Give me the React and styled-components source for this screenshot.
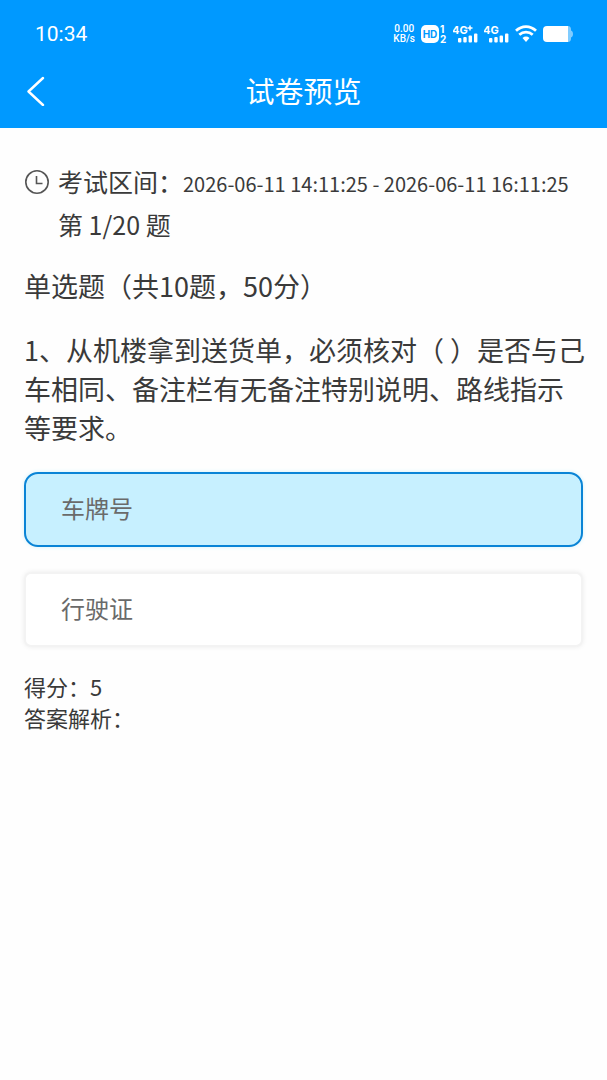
import React from 'react';
import styled, { createGlobalStyle } from 'styled-components';

const GlobalStyle = createGlobalStyle`
  *, *::before, *::after { box-sizing: border-box; }
  body {
    margin: 0;
    background: #fefefe;
    color: #3a3a3a;
    font-family: "Noto Sans CJK SC", "Noto Sans", sans-serif;
  }
`;

const Header = styled.header`
  background: #0099ff;
  color: #fff;
`;

const StatusBar = styled.div`
  display: flex;
  align-items: center;
  justify-content: space-between;
  height: 68px;
  padding: 0 34px 0 35px;
`;

const Time = styled.time`
  font: 400 21px/28px Roboto, sans-serif;
`;

const StatusIcons = styled.div`
  display: flex;
  align-items: center;
  gap: 6px;

  svg { display: block; flex: none; }
`;

const Speed = styled.div`
  font: 500 10px/10px Roboto, sans-serif;
  text-align: center;
`;

const NavBar = styled.nav`
  display: grid;
  grid-template-columns: 72px 1fr 72px;
  align-items: center;
  height: 60px;
  padding-bottom: 14px;
`;

const BackButton = styled.button`
  display: flex;
  align-items: center;
  height: 46px;
  padding: 0 0 0 26px;
  border: 0;
  background: none;
  color: inherit;
  cursor: pointer;
`;

const Title = styled.h1`
  margin: 0;
  padding-bottom: 2px;
  font-size: 29px;
  line-height: 42px;
  font-weight: 400;
  text-align: center;
`;

const Content = styled.main`
  padding: 32px 24px;
`;

const ExamInfo = styled.section`
  display: grid;
  grid-template-columns: 34px 1fr;
  align-items: center;
  font-size: 25px;
  line-height: 43px;

  svg { display: block; }
`;

const Period = styled.div`
  display: flex;
  align-items: baseline;
  white-space: nowrap;
`;

const PeriodRange = styled.span`
  font-size: 20px;
  line-height: 30px;
`;

const Progress = styled.div`
  grid-column: 2;
`;

const SectionTitle = styled.h2`
  margin: 20px 0 24px;
  font-size: 27px;
  line-height: 40px;
  font-weight: 400;
`;

const Question = styled.fieldset`
  min-width: 0;
  margin: 0;
  padding: 0;
  border: 0;
`;

const QuestionText = styled.legend`
  width: calc(100% + 6px);
  margin-right: -6px;
  padding: 0;
  font-size: 27px;
  line-height: 39px;
`;

const Options = styled.div`
  display: grid;
  gap: 25px;
  margin-top: 25px;
`;

const Option = styled.label`
  position: relative;
  display: flex;
  align-items: center;
  height: 75px;
  padding: 0 35px 4px;
  border: 2px solid #f3f3f3;
  border-radius: 7px;
  background: #fff;
  box-shadow: 0 0 5px #ececec;
  color: #6a6a6a;
  font-size: 24px;
  line-height: 36px;
  cursor: pointer;

  &:has(input:checked) {
    border-color: #0a84d6;
    border-radius: 14px;
    background: #c7f0ff;
    box-shadow: 0 0 4px #d4f2fb;
  }
`;

const OptionInput = styled.input`
  position: absolute;
  inset: 0;
  margin: 0;
  opacity: 0;
  cursor: pointer;
`;

const Result = styled.section`
  margin-top: 24px;
  font-size: 22px;
  line-height: 31px;
`;

const ResultLine = styled.p`
  margin: 0;
`;

const glyphFont = { fontFamily: 'Inter, sans-serif', fontWeight: 700, fill: '#fff' };

function HdIcon() {
  return (
    <svg width="26" height="26" viewBox="0 -4 26 26" aria-hidden="true">
      <rect x="0" y="0" width="18" height="18" rx="5" fill="#fff" />
      <text {...glyphFont} x="9" y="13" textAnchor="middle" fontSize="10" fill="#0099ff">HD</text>
      <text {...glyphFont} x="19" y="8" fontSize="10">1</text>
      <text {...glyphFont} x="19" y="18" fontSize="10">2</text>
    </svg>
  );
}

function SignalIcon({ plus }) {
  return (
    <svg width="25" height="26" viewBox="0 -4 25 26" aria-hidden="true">
      <text {...glyphFont} x="-1" y="9" fontSize="11">4G</text>
      {plus && <path d="M17 .5v5M14.500 3h5" stroke="#fff" strokeWidth="1.500" />}
      <g fill="#fff">
        <rect x="5" y="13" width="3.4" height="4.500" rx="1" />
        <rect x="10.3" y="12" width="3.4" height="5.500" rx="1" />
        <rect x="15.6" y="10.500" width="3.4" height="7" rx="1" />
        <rect x="21" y="8.500" width="3.4" height="9" rx="1" />
      </g>
    </svg>
  );
}

function WifiIcon() {
  return (
    <svg width="22" height="18" viewBox="0 0 22 18" fill="none" stroke="#fff" strokeWidth="2.700" aria-hidden="true">
      <path d="M1 5.800C6.8.2 15.2.2 21 5.800" />
      <path d="M4.300 9.800c3.900-3.700 9.500-3.700 13.400 0" />
      <path d="M7.500 12.900c2.200-1.900 4.800-1.900 7 0L11 17z" fill="#fff" stroke="none" />
    </svg>
  );
}

function BatteryIcon() {
  return (
    <svg width="30" height="16" viewBox="0 0 30 16" aria-hidden="true">
      <path d="M25 0c2 0 3 1.500 3 3.500v1c1.400.5 2 1.700 2 3.500s-.6 3-2 3.500v1c0 2-1 3.500-3 3.500z" fill="#80ccff" />
      <path d="M4 0h21v16H4a4 4 0 0 1-4-4V4a4 4 0 0 1 4-4z" fill="#fff" />
    </svg>
  );
}

function BackIcon() {
  return (
    <svg width="20" height="30" viewBox="0 0 20 30" fill="none" stroke="currentColor" strokeWidth="2.400" strokeLinecap="round" strokeLinejoin="round" aria-hidden="true">
      <path d="M17 2 2.500 15.500 17 29" />
    </svg>
  );
}

function ClockIcon() {
  return (
    <svg width="26" height="26" viewBox="0 0 26 26" fill="none" stroke="#555" strokeWidth="1.600" aria-hidden="true">
      <circle cx="13" cy="13" r="11.200" />
      <path d="M12.500 7v7.500h6" />
    </svg>
  );
}

const options = ['车牌号', '行驶证'];

export default function App() {
  return (
    <>
      <GlobalStyle />
      <Header>
        <StatusBar>
          <Time>10:34</Time>
          <StatusIcons>
            <Speed>0.00<br />KB/s</Speed>
            <HdIcon />
            <SignalIcon plus />
            <SignalIcon />
            <WifiIcon />
            <BatteryIcon />
          </StatusIcons>
        </StatusBar>
        <NavBar>
          <BackButton type="button" aria-label="返回"><BackIcon /></BackButton>
          <Title>试卷预览</Title>
        </NavBar>
      </Header>
      <Content>
        <ExamInfo>
          <ClockIcon />
          <Period>考试区间：<PeriodRange>2026-06-11 14:11:25 - 2026-06-11 16:11:25</PeriodRange></Period>
          <Progress>第 1/20 题</Progress>
        </ExamInfo>
        <SectionTitle>单选题（共10题，50分）</SectionTitle>
        <Question>
          <QuestionText>1、从机楼拿到送货单，必须核对（ ）是否与己车相同、备注栏有无备注特别说明、路线指示等要求。</QuestionText>
          <Options>
            {options.map((text, i) => (
              <Option key={text}>
                <OptionInput type="radio" name="answer" defaultChecked={i === 0} />
                {text}
              </Option>
            ))}
          </Options>
        </Question>
        <Result>
          <ResultLine>得分：5</ResultLine>
          <ResultLine>答案解析：</ResultLine>
        </Result>
      </Content>
    </>
  );
}
